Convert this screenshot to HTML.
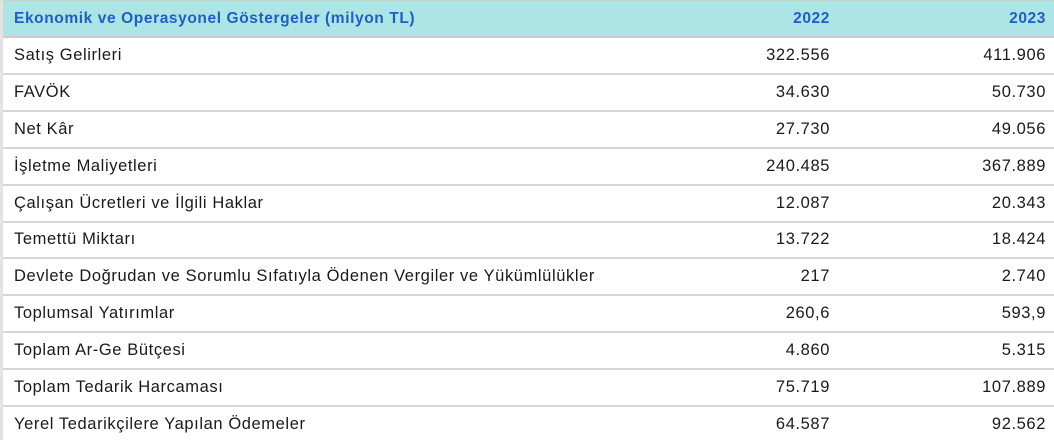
<!DOCTYPE html><html><head><style>
body{margin:0;width:1054px;height:440px;overflow:hidden;background:#fff;font-family:"Liberation Sans",sans-serif;}
.t{position:absolute;left:0;top:0;width:1054px;height:440px;border-left:3px solid #e3e3e3;box-sizing:border-box}
.r{position:absolute;left:0;width:1051px;height:35px;border-bottom:2px solid #d6d6d6;font-size:16.5px;letter-spacing:0.6px;color:#1a1a1a;line-height:35px}
.r span{position:absolute}
.a{left:11px}.b{right:224px}.c{right:8px}
.h{background:#ade5e6;color:#1e5fc6;font-weight:bold;font-size:15.5px;letter-spacing:0.6px;border-top:2px solid #c9d2d2;border-bottom:2px solid #c8cccc;height:34px;line-height:34px}
</style></head><body><div class="t">
<div class="r h" style="top:0"><span class="a">Ekonomik ve Operasyonel Göstergeler (milyon TL)</span><span class="b">2022</span><span class="c">2023</span></div>
<div class="r" style="top:38px"><span class="a">Satış Gelirleri</span><span class="b">322.556</span><span class="c">411.906</span></div>
<div class="r" style="top:75px"><span class="a">FAVÖK</span><span class="b">34.630</span><span class="c">50.730</span></div>
<div class="r" style="top:112px"><span class="a">Net Kâr</span><span class="b">27.730</span><span class="c">49.056</span></div>
<div class="r" style="top:149px"><span class="a">İşletme Maliyetleri</span><span class="b">240.485</span><span class="c">367.889</span></div>
<div class="r" style="top:186px"><span class="a">Çalışan Ücretleri ve İlgili Haklar</span><span class="b">12.087</span><span class="c">20.343</span></div>
<div class="r" style="top:222px"><span class="a">Temettü Miktarı</span><span class="b">13.722</span><span class="c">18.424</span></div>
<div class="r" style="top:259px"><span class="a">Devlete Doğrudan ve Sorumlu Sıfatıyla Ödenen Vergiler ve Yükümlülükler</span><span class="b">217</span><span class="c">2.740</span></div>
<div class="r" style="top:296px"><span class="a">Toplumsal Yatırımlar</span><span class="b">260,6</span><span class="c">593,9</span></div>
<div class="r" style="top:333px"><span class="a">Toplam Ar-Ge Bütçesi</span><span class="b">4.860</span><span class="c">5.315</span></div>
<div class="r" style="top:370px"><span class="a">Toplam Tedarik Harcaması</span><span class="b">75.719</span><span class="c">107.889</span></div>
<div class="r" style="top:407px;border-bottom:none"><span class="a">Yerel Tedarikçilere Yapılan Ödemeler</span><span class="b">64.587</span><span class="c">92.562</span></div>
</div></body></html>
